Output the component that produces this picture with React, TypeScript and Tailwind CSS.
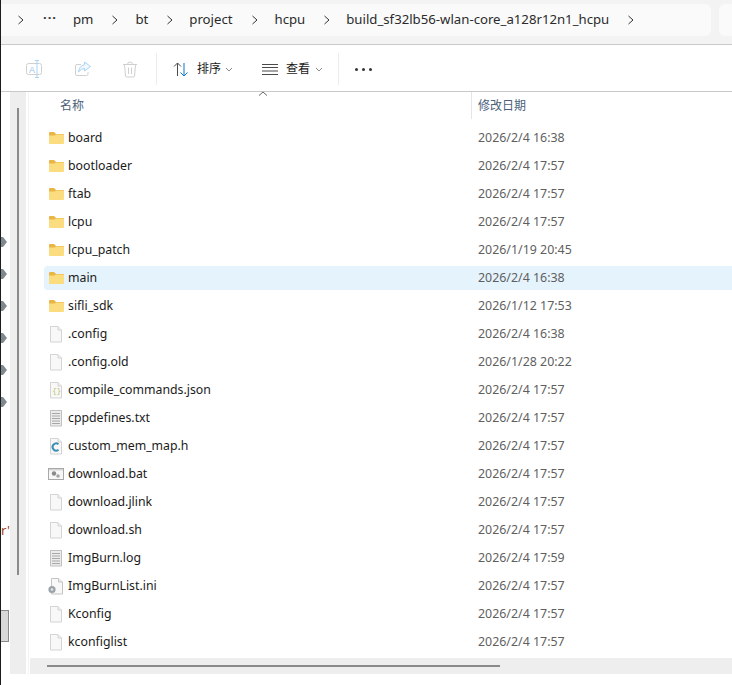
import React from 'react'

type Kind = 'folder' | 'file' | 'json' | 'text' | 'c' | 'bat' | 'ini'

interface Entry {
  name: string
  date: string
  kind: Kind
  active?: boolean
}

const entries: Entry[] = [
  { name: 'board', date: '2026/2/4 16:38', kind: 'folder' },
  { name: 'bootloader', date: '2026/2/4 17:57', kind: 'folder' },
  { name: 'ftab', date: '2026/2/4 17:57', kind: 'folder' },
  { name: 'lcpu', date: '2026/2/4 17:57', kind: 'folder' },
  { name: 'lcpu_patch', date: '2026/1/19 20:45', kind: 'folder' },
  { name: 'main', date: '2026/2/4 16:38', kind: 'folder', active: true },
  { name: 'sifli_sdk', date: '2026/1/12 17:53', kind: 'folder' },
  { name: '.config', date: '2026/2/4 16:38', kind: 'file' },
  { name: '.config.old', date: '2026/1/28 20:22', kind: 'file' },
  { name: 'compile_commands.json', date: '2026/2/4 17:57', kind: 'json' },
  { name: 'cppdefines.txt', date: '2026/2/4 17:57', kind: 'text' },
  { name: 'custom_mem_map.h', date: '2026/2/4 17:57', kind: 'c' },
  { name: 'download.bat', date: '2026/2/4 17:57', kind: 'bat' },
  { name: 'download.jlink', date: '2026/2/4 17:57', kind: 'file' },
  { name: 'download.sh', date: '2026/2/4 17:57', kind: 'file' },
  { name: 'ImgBurn.log', date: '2026/2/4 17:59', kind: 'text' },
  { name: 'ImgBurnList.ini', date: '2026/2/4 17:57', kind: 'ini' },
  { name: 'Kconfig', date: '2026/2/4 17:57', kind: 'file' },
  { name: 'kconfiglist', date: '2026/2/4 17:57', kind: 'file' },
]

const crumbs = [
  { label: 'pm', ml: 'ml-[16px]' },
  { label: 'bt', ml: 'ml-[16px]' },
  { label: 'project', ml: 'ml-[15px]' },
  { label: 'hcpu', ml: 'ml-[16px]' },
  { label: 'build_sf32lb56-wlan-core_a128r12n1_hcpu', ml: 'ml-[15px]' },
]

const Chevron = ({ className = '' }: { className?: string }) => (
  <svg width="8" height="10" viewBox="0 0 8 10" className={className}>
    <path d="M1.5 1 L6 5 L1.5 9" fill="none" stroke="#333" strokeWidth="1" />
  </svg>
)

const DownCaret = () => (
  <svg width="8" height="5" viewBox="0 0 8 5">
    <path d="M1 1 L4 4 L7 1" fill="none" stroke="#8a8a8a" strokeWidth="1" />
  </svg>
)

const Page = ({ children }: { children?: React.ReactNode }) => (
  <svg width="16" height="17" viewBox="0 0 16 17">
    <path d="M2.5 .5 H10 L13.5 4 V16 H2.5 Z" fill="#f8f8f8" stroke="#d4d4d4" />
    <path d="M10 .5 V4 H13.5" fill="#efefef" stroke="#d4d4d4" />
    {children}
  </svg>
)

const FileIcon = ({ kind }: { kind: Kind }) => {
  if (kind === 'folder')
    return (
      <svg width="15" height="12" viewBox="0 0 15 12" className="ml-px">
        <path d="M0 1 Q0 0 1 0 H5 L7 2 H14 Q15 2 15 3 V5 H0 Z" fill="#e9b544" />
        <path d="M0 3.5 H5.5 L7 2.5 H14 Q15 2.5 15 3.5 V11 Q15 12 14 12 H1 Q0 12 0 11 Z" fill="#fbdc7e" />
      </svg>
    )
  if (kind === 'json')
    return (
      <Page>
        <text x="4.6" y="11" fontSize="7" fill="#b9bc5c" fontFamily="Liberation Mono, monospace">
          {'{}'}
        </text>
      </Page>
    )
  if (kind === 'text')
    return (
      <svg width="16" height="17" viewBox="0 0 16 17">
        <path d="M2.5 .5 H13.5 V16 H2.5 Z" fill="#ececec" stroke="#c0c0c0" />
        <path d="M4 3.5 H12 M4 6 H12 M4 8.5 H12 M4 11 H12 M4 13.5 H12" stroke="#a8a8a8" strokeWidth="1" />
      </svg>
    )
  if (kind === 'c')
    return (
      <Page>
        <path d="M10.5 6.2 A3.6 3.6 0 1 0 10.5 11.8" fill="none" stroke="#3d8fb5" strokeWidth="2" />
      </Page>
    )
  if (kind === 'bat')
    return (
      <svg width="16" height="14" viewBox="0 0 16 14">
        <rect x=".5" y="1.5" width="15" height="11" fill="#f7f7f7" stroke="#a8a8a8" />
        <rect x="1" y="2" width="14" height="1.5" fill="#d5d5d5" />
        <circle cx="6" cy="6.5" r="2.2" fill="#8a8a8a" />
        <circle cx="10" cy="9" r="1.8" fill="#a5a5a5" />
      </svg>
    )
  if (kind === 'ini')
    return (
      <svg width="16" height="17" viewBox="0 0 16 17">
        <path d="M3.5 .5 H10.5 L14.5 4 V16 H3.5 Z" fill="#f8f8f8" stroke="#c4c4c4" />
        <path d="M10.5 .5 V4 H14.5" fill="#efefef" stroke="#c4c4c4" />
        <circle cx="4" cy="11.5" r="3.6" fill="#9aa3a8" />
        <circle cx="4" cy="11.5" r="1.3" fill="#e6e6e6" />
      </svg>
    )
  return <Page />
}

const LeftStrip = () => (
  <div className="w-[9px] shrink-0 flex flex-col">
    <div className="mt-[145px] flex flex-col gap-[22px]">
      {[0, 1, 2, 3, 4, 5].map((i) => (
        <svg key={i} width="6" height="10" viewBox="0 0 6 10" className="block">
          <path d="M0 0 H2 L6 5 L2 10 H0 Z" fill="#7f8a90" />
        </svg>
      ))}
    </div>
    <div className="mt-[115px] h-[16px] text-[13px] leading-4 text-[#a33a1c] overflow-hidden">r'</div>
    <div className="mt-[72px] h-[32px] w-[8px] bg-[#d8d8d8] border border-l-0 border-[#8a8a8a]" />
  </div>
)

export default function App() {
  return (
    <div
      className="relative w-[732px] h-[685px] overflow-hidden bg-white flex text-[#1a1a1a]"
      style={{ fontFamily: '"Noto Sans", "Noto Sans CJK SC", sans-serif' }}
    >
      <div className="w-px h-full shrink-0 bg-[#1c1c1c]" />
      <div className="flex-1 min-w-0 flex flex-col">
        <div className="h-[44px] shrink-0 bg-[#f3f3f3] flex gap-2 pt-1">
          <div className="w-[710px] h-8 shrink-0 bg-[#fafafa] rounded-r-md flex items-center pl-[16px] text-[13.2px] text-[#2a2a2a]">
            <Chevron />
            <span className="ml-[18px] text-[#333] text-[13px] font-bold tracking-[1px] -mt-1">···</span>
            {crumbs.map((c) => (
              <React.Fragment key={c.label}>
                <span className={c.ml}>{c.label}</span>
                <Chevron className="ml-[18px]" />
              </React.Fragment>
            ))}
          </div>
          <div className="flex-1 h-8 bg-[#fafafa] rounded-l-md" />
        </div>
        <div className="h-[48px] shrink-0 bg-white border-y border-[#c9c9c9] flex items-center pt-[2px] text-[12px]">
          <div className="ml-[25px]">
            <svg width="16" height="18" viewBox="0 0 16 18" className="block">
              <rect x=".5" y="3.5" width="15" height="11" rx="2" fill="none" stroke="#d0d0d0" />
              <text x="3" y="12.5" fontSize="9" fill="#9cc6ea" fontFamily="Liberation Sans, sans-serif">A</text>
              <path d="M11 .5 V17.5 M9 .5 H13 M9 17.5 H13" stroke="#a9d3f3" strokeWidth="1" />
            </svg>
          </div>
          <div className="ml-[33px]">
            <svg width="16" height="16" viewBox="0 0 16 16" className="block">
              <path d="M6 3.5 H2 Q.5 3.5 .5 5 V13 Q.5 14.5 2 14.5 H11.5 Q13 14.5 13 13 V11" fill="none" stroke="#d0d0d0" />
              <path d="M9.5 1 L15.5 5.5 L9.5 10 V7.5 Q6 7.5 3.5 11 Q4 5 9.5 3.8 Z" fill="#f2f8fd" stroke="#a9d3f3" />
            </svg>
          </div>
          <div className="ml-[31px]">
            <svg width="16" height="17" viewBox="0 0 16 17" className="block">
              <path d="M1 3.5 H15 M5.5 3.5 Q5.5 1 8 1 Q10.5 1 10.5 3.5" fill="none" stroke="#cfcfcf" />
              <path d="M2.5 3.5 L3.5 15 Q3.6 16 4.6 16 H11.4 Q12.4 16 12.5 15 L13.5 3.5" fill="none" stroke="#cfcfcf" />
              <path d="M6.5 6.5 V13 M9.5 6.5 V13" stroke="#cfcfcf" />
            </svg>
          </div>
          <div className="ml-[18px] w-px h-[32px] bg-[#ececec]" />
          <div className="ml-[16px]">
            <svg width="16" height="15" viewBox="0 0 16 15" className="block">
              <path d="M4.5 14 V1 M1 4.5 L4.5 1 L8 4.5" fill="none" stroke="#4a4a4a" />
              <path d="M11 1 V14 M7.5 10.5 L11 14 L14.5 10.5" fill="none" stroke="#0a74c9" />
            </svg>
          </div>
          <span className="ml-[8px] w-[24px]">排序</span>
          <div className="ml-[4px]"><DownCaret /></div>
          <div className="ml-[29px]">
            <svg width="16" height="11" viewBox="0 0 16 11" className="block">
              <path d="M0 .5 H16 M0 3.5 H16 M0 7 H16 M0 10.5 H16" stroke="#4a4a4a" />
            </svg>
          </div>
          <span className="ml-[8px] w-[24px]">查看</span>
          <div className="ml-[5px]"><DownCaret /></div>
          <div className="ml-[15px] w-px h-[32px] bg-[#ececec]" />
          <div className="ml-[16px] flex gap-[4px]">
            <span className="block w-[3px] h-[3px] rounded-full bg-[#333]" />
            <span className="block w-[3px] h-[3px] rounded-full bg-[#333]" />
            <span className="block w-[3px] h-[3px] rounded-full bg-[#333]" />
          </div>
        </div>
        <div className="flex-1 min-h-0 flex">
          <LeftStrip />
          <div className="w-4 h-[582px] shrink-0 bg-[#eeeeee] pl-[7px] pt-[16px]">
            <div className="w-[2px] h-[467px] bg-[#8a8a8a]" />
          </div>
          <div className="ml-[2px] w-px h-[582px] shrink-0 bg-[#f3f3f3]" />
          <div className="ml-px flex-1 min-w-0 h-[582px] flex flex-col relative">
            <div className="h-[27px] shrink-0 flex text-[12px] text-[#4c607a]">
              <div className="w-[442px] pl-[30px] leading-[28px] border-r border-[#e5e5e5]">名称</div>
              <div className="pl-[6px] leading-[28px]">修改日期</div>
            </div>
            <svg width="10" height="5" viewBox="0 0 10 5" className="absolute left-[228px] top-[-1px]">
              <path d="M1 4.5 L5 1 L9 4.5" fill="none" stroke="#666" />
            </svg>
            <div className="flex-1 min-h-0 pt-[7px] pl-[14px] overflow-hidden">
              {entries.map((e) => (
                <div
                  key={e.name}
                  className={`h-6 mb-1 flex items-center rounded-l ${e.active ? 'bg-[#e5f3fd]' : ''}`}
                >
                  <div className="w-6 shrink-0 pl-[4px] flex items-center">
                    <FileIcon kind={e.kind} />
                  </div>
                  <div className="w-[403px] shrink-0 text-[12.3px]">{e.name}</div>
                  <div className="pl-[7px] text-[12.4px] text-[#5f5f5f]">{e.date}</div>
                </div>
              ))}
            </div>
            <div className="h-[16px] shrink-0 bg-[#eeeeee] pl-[17px] pt-[7px]">
              <div className="w-[453px] h-[2px] bg-[#8a8a8a]" />
            </div>
          </div>
        </div>
      </div>
    </div>
  )
}
